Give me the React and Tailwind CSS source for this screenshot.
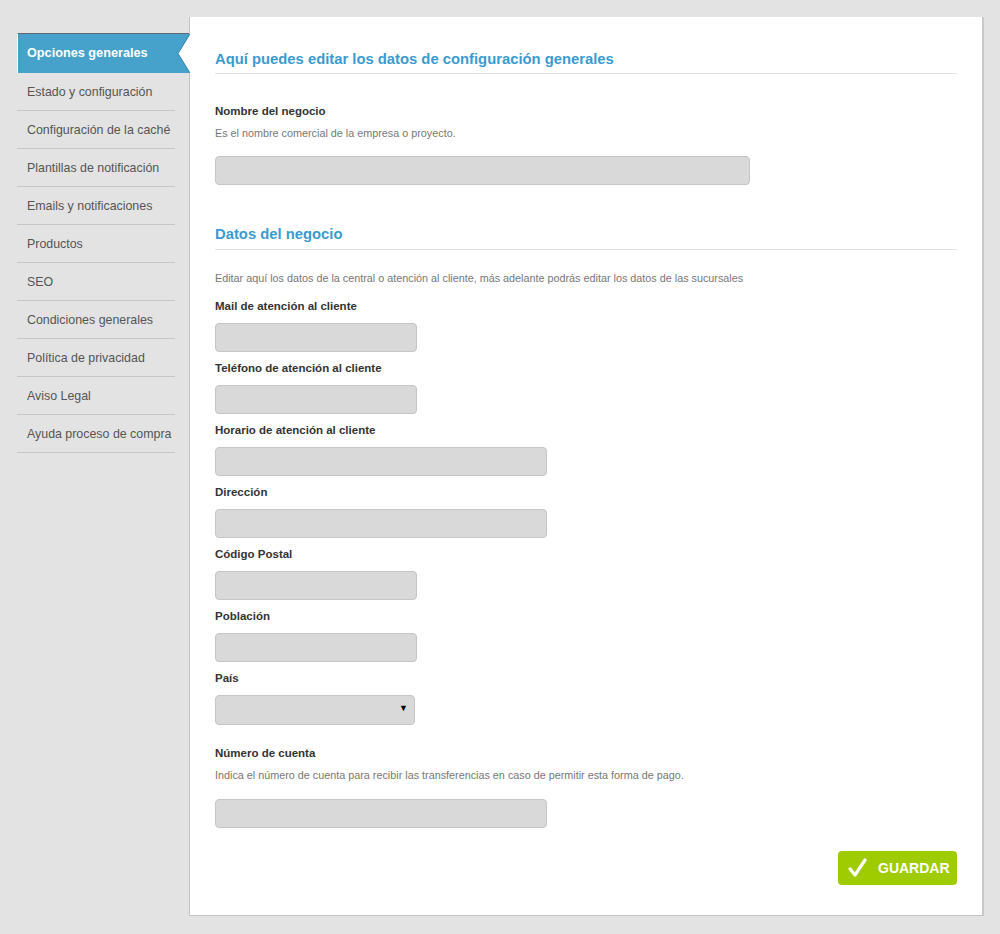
import React from "react";

const menu = [
  "Estado y configuración",
  "Configuración de la caché",
  "Plantillas de notificación",
  "Emails y notificaciones",
  "Productos",
  "SEO",
  "Condiciones generales",
  "Política de privacidad",
  "Aviso Legal",
  "Ayuda proceso de compra",
];

function Field({ label, width, select }) {
  return (
    <div className="flex flex-col">
      <label className="text-[11.5px] font-bold leading-[17px] text-[#333]">{label}</label>
      <div
        className={`relative mt-2 mb-2 h-[29px] rounded-[4px] border border-[#c6c6c6] bg-[#d9d9d9] ${width}`}
      >
        {select && (
          <span className="absolute right-[6px] top-[8px] text-[9px] leading-none text-black">▼</span>
        )}
      </div>
    </div>
  );
}

export default function App() {
  return (
    <div
      className="flex min-h-[934px] bg-[#e3e3e3] pl-[17px] pt-[17px] pb-[18px]"
      style={{ fontFamily: '"Liberation Sans", Arial, sans-serif' }}
    >
      {/* sidebar */}
      <div className="w-[172px] shrink-0 pt-[16px]">
        <div className="relative flex h-[40px] items-center whitespace-nowrap border-t border-[#5d6a72] border-l border-l-white bg-[#46a2cb] pl-[9px] text-[12.7px] font-bold text-white">
          Opciones generales
          <svg className="absolute right-[-1px] top-[-1px]" width="13" height="41" viewBox="0 0 13 41">
            <polygon points="13,1 1,20.5 13,40" fill="#ffffff" />
            <polyline points="13,1 1,20.5 13,40" fill="none" stroke="#2f84ad" strokeWidth="1" />
          </svg>
        </div>
        <ul className="w-[158px]">
          {menu.map((m) => (
            <li
              key={m}
              className="flex h-[38px] items-center whitespace-nowrap border-b border-[#c6c6c6] pl-[10px] pt-[1px] text-[12.4px] text-[#555]"
            >
              {m}
            </li>
          ))}
        </ul>
      </div>

      {/* main panel */}
      <div className="h-[899px] w-[795px] border-l border-b border-[#c4c4c4] border-r-2 border-r-[#c9c9c9] bg-white pl-[25px] pr-[25px] pt-[32px]">
        <h2 className="border-b border-[#e2e2e2] pb-[4px] text-[14.8px] font-bold leading-[20px] text-[#3a9bd0]">
          Aquí puedes editar los datos de configuración generales
        </h2>

        <div className="mt-[29px] text-[11.5px] font-bold leading-[17px] text-[#333]">Nombre del negocio</div>
        <p className="mt-[6px] text-[10.8px] leading-[14px] text-[#777]">
          Es el nombre comercial de la empresa o proyecto.
        </p>
        <div className="mt-[16px] h-[29px] w-[535px] rounded-[4px] border border-[#c6c6c6] bg-[#d9d9d9]" />

        <h2 className="mt-[39px] border-b border-[#e2e2e2] pb-[5px] text-[14.8px] font-bold leading-[20px] text-[#3a9bd0]">
          Datos del negocio
        </h2>
        <p className="mt-[21px] text-[10.8px] leading-[14px] text-[#777]">
          Editar aquí los datos de la central o atención al cliente, más adelante podrás editar los datos de las sucursales
        </p>

        <div className="mt-[13px]">
          <Field label="Mail de atención al cliente" width="w-[202px]" />
          <Field label="Teléfono de atención al cliente" width="w-[202px]" />
          <Field label="Horario de atención al cliente" width="w-[332px]" />
          <Field label="Dirección" width="w-[332px]" />
          <Field label="Código Postal" width="w-[202px]" />
          <Field label="Población" width="w-[202px]" />
          <Field label="País" width="w-[200px] h-[30px]" select />
        </div>

        <div className="mt-[12px] text-[11.5px] font-bold leading-[17px] text-[#333]">Número de cuenta</div>
        <p className="mt-[6px] text-[10.8px] leading-[14px] text-[#777]">
          Indica el número de cuenta para recibir las transferencias en caso de permitir esta forma de pago.
        </p>
        <div className="mt-[17px] h-[29px] w-[332px] rounded-[4px] border border-[#c6c6c6] bg-[#d9d9d9]" />

        <div className="mt-[23px] flex justify-end">
          <button className="flex h-[34px] w-[119px] items-center rounded-[4px] bg-[#9fcc00] pl-[10px] text-[14px] font-bold text-white">
            <svg width="20" height="20" viewBox="0 0 20 20" className="mr-[10px]">
              <path d="M2 11 L7 17 L17 2" fill="none" stroke="#fff" strokeWidth="3.2" strokeLinecap="round" strokeLinejoin="round" />
            </svg>
            GUARDAR
          </button>
        </div>
      </div>
    </div>
  );
}
